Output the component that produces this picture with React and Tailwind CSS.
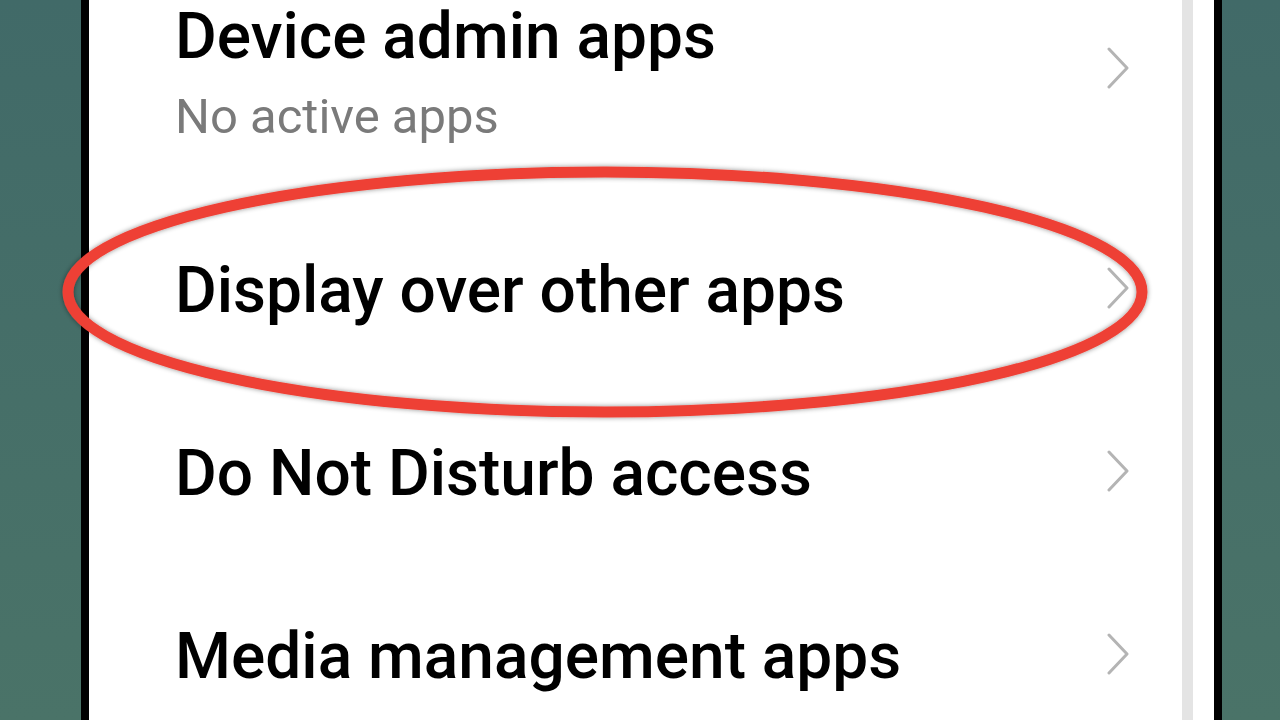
import React from "react";

const Chevron = ({ className = "" }) => (
    <svg width="24" height="42" viewBox="0 0 24 42" fill="none" className={`shrink-0 ${className}`}>
        <path d="M3 2 L21 21 L3 40" stroke="#b4b4b4" strokeWidth="3" strokeLinecap="round" strokeLinejoin="round" />
    </svg>
);

const rows = [
    { title: "Display over other apps" },
    { title: "Do Not Disturb access" },
    { title: "Media management apps" },
];

const App = () => {
    return (
        <div
            className="w-[1280px] h-[720px] overflow-hidden flex relative"
            style={{ fontFamily: "Roboto, 'Noto Sans', sans-serif" }}
        >
            <div className="w-[81px] bg-gradient-to-b from-[#416a68] to-[#4a7368]" />
            <div className="w-[8px] bg-black" />
            <div className="flex-1 bg-white flex">
                <div className="flex-1 flex flex-col">
                    <div className="h-[196px] shrink-0 flex items-start pl-[86px] pr-[52px]">
                        <div className="flex-1 flex flex-col pt-[1px]">
                            <span className="text-[64px] leading-[72px] font-medium text-black">Device admin apps</span>
                            <span className="text-[49px] leading-[56px] text-[#7a7a7a] mt-[16px]">No active apps</span>
                        </div>
                        <Chevron className="mt-[47px]" />
                    </div>
                    {rows.map((row) => (
                        <div key={row.title} className="h-[183px] shrink-0 flex items-center pl-[86px] pr-[52px]">
                            <span className="flex-1 text-[64px] leading-[72px] font-medium text-black mt-[6px]">{row.title}</span>
                            <Chevron />
                        </div>
                    ))}
                </div>
                <div className="w-[11px] bg-[#e4e4e4]" />
                <div className="w-[21px]" />
            </div>
            <div className="w-[8px] bg-black" />
            <div className="w-[58px] bg-gradient-to-b from-[#416a68] to-[#4a7368]" />

            <svg className="absolute left-0 top-0 pointer-events-none" width="1280" height="720">
                <defs>
                    <filter id="sh" x="-10%" y="-20%" width="120%" height="140%">
                        <feDropShadow dx="0" dy="0" stdDeviation="2.5" floodColor="#000" floodOpacity="0.45" />
                    </filter>
                </defs>
                <ellipse cx="605" cy="292" rx="537" ry="120" fill="none" stroke="#ee4136" strokeWidth="11" filter="url(#sh)" />
            </svg>
        </div>
    );
};

export default App;
